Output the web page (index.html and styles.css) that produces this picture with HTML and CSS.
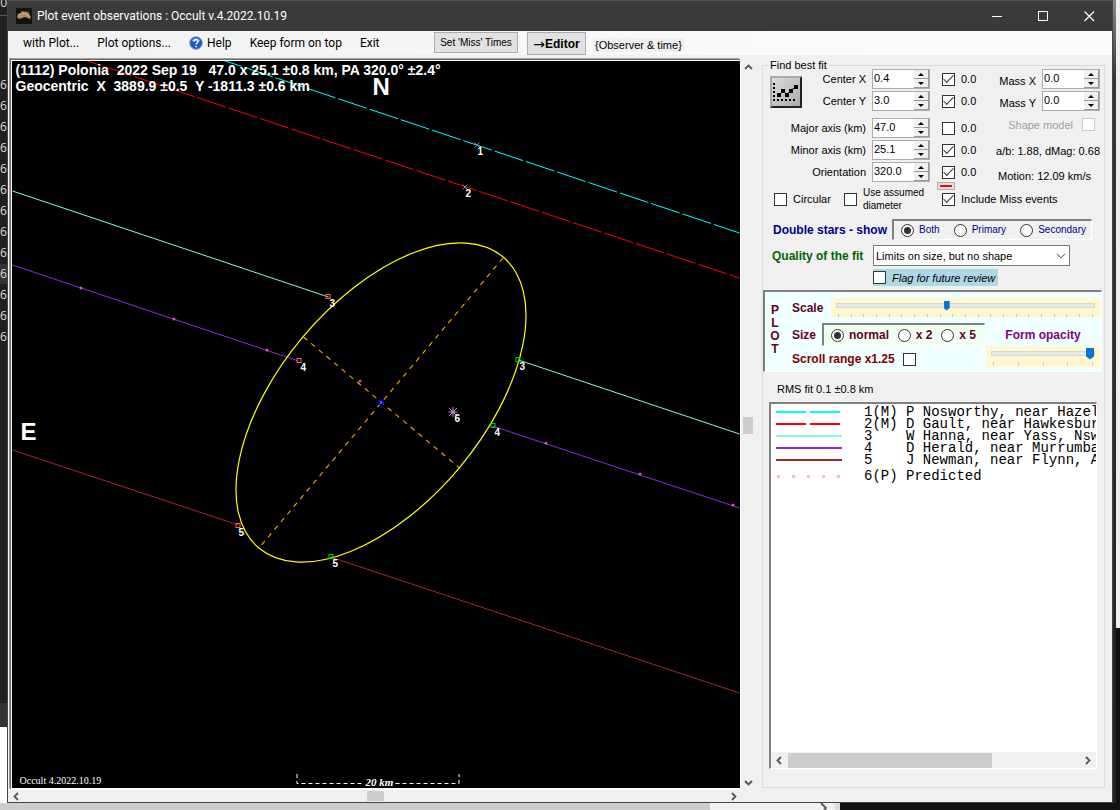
FILE: index.html
```html
<!DOCTYPE html>
<html lang="en">
<head>
<meta charset="utf-8">
<title>Plot event observations : Occult v.4.2022.10.19</title>
<link rel="stylesheet" href="styles.css">
</head>
<body>
<div class="desktop">
  <div class="behind-left">
    <span class="behind-top">20</span>
    <div class="behind-rows"><span>6</span><span>6</span><span>6</span><span>6</span><span>6</span><span>6</span><span>6</span><span>6</span><span>6</span><span class="current">6</span><span>6</span><span>6</span><span>6</span></div>
    <div class="behind-page"></div>
  </div>

  <main class="window">
    <header class="titlebar">
      <svg class="app-icon" width="16" height="16" viewBox="0 0 16 16" aria-hidden="true">
        <rect width="16" height="16" fill="#16130f"/>
        <path d="M1 9 2 6 5 5 6 3 9 4 10 3 11 5 12 3 13 6 15 9 14 11 12 10 9 9 6 10 3 11Z" fill="#b28a60"/>
        <path d="M3 7 6 5 9 6 12 7 13 9" fill="none" stroke="#d0a87a"/>
      </svg>
      <h1 class="title">Plot event observations : Occult v.4.2022.10.19</h1>
      <div class="window-buttons">
        <button aria-label="Minimize"><svg width="11" height="11" viewBox="0 0 11 11"><path d="M0 5.5H10" stroke="#fff"/></svg></button>
        <button aria-label="Maximize"><svg width="11" height="11" viewBox="0 0 11 11"><rect x=".5" y=".5" width="9" height="9" fill="none" stroke="#fff"/></svg></button>
        <button aria-label="Close"><svg width="11" height="11" viewBox="0 0 11 11"><path d="M.5 .5 10 10M10 .5 .5 10" stroke="#fff" stroke-width="1.2"/></svg></button>
      </div>
    </header>

    <nav class="menubar">
      <div class="menus">
        <button>with Plot...</button>
        <button>Plot options...</button>
        <button class="help"><svg width="14" height="14" viewBox="0 0 14 14" aria-hidden="true"><circle cx="7" cy="7" r="6.4" fill="#1d55c4" stroke="#9fb0cf"/><path d="M2.6 5.6a4.6 4.6 0 0 1 8.8 0" fill="#5f93ee"/><path d="M4.9 5.4C5 3 9.200 3 9.200 5.300 9.200 6.800 7.100 6.700 7.100 8.600" fill="none" stroke="#fff" stroke-width="1.500"/><circle cx="7.100" cy="10.600" r=".9" fill="#fff"/></svg>Help</button>
        <button>Keep form on top</button>
        <button>Exit</button>
      </div>
      <button class="push miss">Set 'Miss' Times</button>
      <button class="push editor"><span class="arrow">→</span>Editor</button>
      <span class="observer">{Observer &amp; time}</span>
    </nav>

    <div class="content">
      <section class="viewer">
        <div class="plot">
          <svg class="chart" viewBox="12 61 727 727" role="img" aria-label="Chord plot">
            <g fill="none">
              <path class="cyan" d="M222 60 739 233" stroke-dasharray="30 3" stroke-dashoffset="10"/>
              <path class="red" d="M84 60 739 278" stroke-dasharray="30 3" stroke-dashoffset="13"/>
              <path class="aqua" d="M12 191 328 297M518 360 739 434"/>
              <path class="violet" d="M12 265 298 361M492 426 739 508"/>
              <path class="brown" d="M12 450 238 525M330 557 739 693"/>
              <path d="M502.500 258 258.500 548M303 337 459 468" stroke="#ffa500" stroke-dasharray="5 5" stroke-width="1.100"/>
              <ellipse cx="380.500" cy="402.500" rx="190" ry="102" transform="rotate(-50 380.500 402.500)" stroke="#ffff00" stroke-width="1.200"/>
            </g>
            <g fill="#e04fa8">
              <circle cx="80.500" cy="288" r="1.500"/><circle cx="173.500" cy="319" r="1.500"/><circle cx="266.500" cy="350" r="1.500"/><circle cx="359.500" cy="381" r="1.500"/><circle cx="545.500" cy="443" r="1.500"/><circle cx="639.500" cy="474" r="1.500"/><circle cx="732.500" cy="505" r="1.500"/>
            </g>
            <g fill="none" stroke="#ff6347">
              <rect x="325.500" y="294.500" width="4" height="4"/><rect x="296.500" y="358.500" width="4" height="4"/><rect x="235.500" y="523.500" width="4" height="4"/>
            </g>
            <g fill="none" stroke="#00d800">
              <rect x="515.500" y="357.500" width="4" height="4"/><rect x="490.500" y="423.500" width="4" height="4"/><rect x="328.500" y="554.500" width="4" height="4"/>
            </g>
            <circle cx="380.500" cy="402.500" r="2.200" fill="none" stroke="#0000ff" stroke-width="1.600"/>
            <path d="M474 142.500l5 5m0-5l-5 5M462 184.500l5 5m0-5l-5 5" stroke="#888"/>
            <path d="M452.500 407v10M448 412h9M448.500 408l8 8M456.500 408l-8 8" stroke="#9aa0b8"/>
            <circle cx="452.500" cy="412" r="1.700" fill="#ff69b4"/>
            <g class="marks">
              <text x="477" y="155">1</text><text x="465" y="197">2</text><text x="329" y="307">3</text><text x="300" y="371">4</text><text x="519" y="370">3</text><text x="494" y="436">4</text><text x="454" y="422">6</text><text x="238" y="536">5</text><text x="332" y="567">5</text>
            </g>
            <g class="heading">
              <text x="15" y="75">(1112) Polonia  2022 Sep 19   47.0 x 25.1 ±0.8 km, PA 320.0° ±2.4°</text>
              <text x="15" y="91">Geocentric  X  3889.9 ±0.5  Y -1811.3 ±0.6 km</text>
            </g>
            <text class="compass" x="372" y="95">N</text>
            <text class="compass" x="20" y="440">E</text>
            <text class="version" x="19" y="784">Occult 4.2022.10.19</text>
            <path d="M296.500 774v9.500H362M395 783.500H458.500V774" fill="none" stroke="#fff" stroke-dasharray="4 3"/>
            <text class="km" x="365" y="786">20 km</text>
          </svg>
        </div>
        <div class="vscroll">
          <svg width="9" height="6" viewBox="0 0 9 6"><path d="M1 5 4.500 1.500 8 5" fill="none" stroke="#555" stroke-width="1.800"/></svg>
          <div class="vthumb"></div>
          <svg width="9" height="6" viewBox="0 0 9 6"><path d="M1 1 4.500 4.500 8 1" fill="none" stroke="#555" stroke-width="1.800"/></svg>
        </div>
        <div class="hscroll">
          <svg width="6" height="9" viewBox="0 0 6 9"><path d="M5 1 1.500 4.500 5 8" fill="none" stroke="#555" stroke-width="1.800"/></svg>
          <div class="hthumb"></div>
          <svg width="6" height="9" viewBox="0 0 6 9"><path d="M1 1 4.500 4.500 1 8" fill="none" stroke="#555" stroke-width="1.800"/></svg>
        </div>
      </section>

      <fieldset class="fit">
        <legend>Find best fit</legend>
        <div class="params">
          <button class="fit-button" aria-label="Fit">
            <svg width="28" height="28" viewBox="0 0 28 28"><path d="M2 5V24" stroke="#000" stroke-width="2" stroke-dasharray="2 2"/><path d="M1 22H24" stroke="#000" stroke-width="2" stroke-dasharray="2 2"/><path d="M7 17 11 13 15 17 19 12 24 9" fill="none" stroke="#222"/><path d="M5 15h4v4H5zM9 11h4v4H9zM13 15h4v4h-4zM17 11h4v4h-4zM22 7h4v4h-4z"/></svg>
          </button>
          <div class="solve">
            <div class="row"><label for="cx">Center X</label><span class="spin"><input id="cx" value="0.4"><span class="steps"><button aria-label="Increase"></button><button aria-label="Decrease"></button></span></span><label class="tick"><input type="checkbox" checked>0.0</label></div>
            <div class="row"><label for="cy">Center Y</label><span class="spin"><input id="cy" value="3.0"><span class="steps"><button aria-label="Increase"></button><button aria-label="Decrease"></button></span></span><label class="tick"><input type="checkbox" checked>0.0</label></div>
            <div class="row axis"><label for="major">Major axis (km)</label><span class="spin"><input id="major" value="47.0"><span class="steps"><button aria-label="Increase"></button><button aria-label="Decrease"></button></span></span><label class="tick"><input type="checkbox">0.0</label></div>
            <div class="row"><label for="minor">Minor axis (km)</label><span class="spin"><input id="minor" value="25.1"><span class="steps"><button aria-label="Increase"></button><button aria-label="Decrease"></button></span></span><label class="tick"><input type="checkbox" checked>0.0</label></div>
            <div class="row"><label for="pa">Orientation</label><span class="spin"><input id="pa" value="320.0"><span class="steps"><button aria-label="Increase"></button><button aria-label="Decrease"></button></span></span><label class="tick"><input type="checkbox" checked>0.0</label></div>
          </div>
          <div class="mass">
            <div class="row"><label for="mx">Mass X</label><span class="spin"><input id="mx" value="0.0"><span class="steps"><button aria-label="Increase"></button><button aria-label="Decrease"></button></span></span></div>
            <div class="row"><label for="my">Mass Y</label><span class="spin"><input id="my" value="0.0"><span class="steps"><button aria-label="Increase"></button><button aria-label="Decrease"></button></span></span></div>
            <label class="shape">Shape model<input type="checkbox" disabled></label>
            <output class="ratio">a/b: 1.88, dMag: 0.68</output>
            <output class="motion">Motion: 12.09 km/s</output>
          </div>
        </div>

        <div class="options">
          <label class="circular"><input type="checkbox">Circular</label>
          <label class="assumed"><input type="checkbox"><span>Use assumed<br>diameter</span></label>
          <div class="miss-events">
            <button class="red-key" aria-label="Miss colour"></button>
            <label><input type="checkbox" checked>Include Miss events</label>
          </div>
        </div>

        <div class="double">
          <strong>Double stars - show</strong>
          <div class="sunken stars" role="radiogroup" aria-label="Double stars - show">
            <label><input type="radio" name="stars" checked>Both</label>
            <label><input type="radio" name="stars">Primary</label>
            <label><input type="radio" name="stars">Secondary</label>
          </div>
        </div>

        <div class="quality">
          <label class="quality-label" for="quality">Quality of the fit</label>
          <div class="select-wrap">
            <select id="quality"><option>Limits on size, but no shape</option></select>
            <svg width="10" height="6" viewBox="0 0 10 6"><path d="M1 .8 5 4.800 9 .8" fill="none" stroke="#444"/></svg>
          </div>
        </div>
        <label class="flag"><input type="checkbox"><em>Flag for future review</em></label>

        <section class="plot-options sunken">
          <div class="letters"><span>P</span><span>L</span><span>O</span><span>T</span></div>
          <div class="plot-body">
            <div class="scale">
              <label for="scale">Scale</label>
              <div class="slider">
                <input id="scale" type="range" min="0" max="1000" value="425">
                <div class="ticks"><i></i><i></i><i></i><i></i><i></i><i></i><i></i><i></i><i></i><i></i><i></i><i></i><i></i><i></i><i></i><i></i><i></i><i></i><i></i><i></i><i></i></div>
              </div>
            </div>
            <div class="plot-lower">
              <div class="size-col">
                <div class="size">
                  <span>Size</span>
                  <div class="sunken sizes" role="radiogroup" aria-label="Size">
                    <label><input type="radio" name="size" checked>normal</label>
                    <label><input type="radio" name="size">x 2</label>
                    <label><input type="radio" name="size">x 5</label>
                  </div>
                </div>
                <label class="range-check">Scroll range x1.25<input type="checkbox"></label>
              </div>
              <div class="opacity">
                <label for="opacity">Form opacity</label>
                <div class="slider big">
                  <input id="opacity" type="range" min="0" max="100" value="100">
                  <div class="ticks"><i></i><i></i><i></i><i></i><i></i></div>
                </div>
              </div>
            </div>
          </div>
        </section>

        <output class="rms">RMS fit 0.1 ±0.8 km</output>

        <div class="list sunken">
          <ul>
            <li><svg width="66" height="12"><path class="cyan" d="M0 6H30M34 6H64"/></svg><span>1(M)</span><span>P Nosworthy, near Hazel</span></li>
            <li><svg width="66" height="12"><path class="red" d="M0 6H30M34 6H64"/></svg><span>2(M)</span><span>D Gault, near Hawkesbur</span></li>
            <li><svg width="66" height="12"><path class="aqua" d="M0 6H66"/></svg><span>3</span><span>W Hanna, near Yass, Nsw</span></li>
            <li><svg width="66" height="12"><path class="violet" d="M0 6H66"/></svg><span>4</span><span>D Herald, near Murrumba</span></li>
            <li><svg width="66" height="12"><path class="brown" d="M0 6H66"/></svg><span>5</span><span>J Newman, near Flynn, A</span></li>
            <li class="predicted"><svg width="66" height="12" fill="none" stroke="#ff69b4"><circle cx="2.500" cy="6.500" r="1"/><circle cx="17.500" cy="6.500" r="1"/><circle cx="32.500" cy="6.500" r="1"/><circle cx="47.500" cy="6.500" r="1"/><circle cx="62.500" cy="6.500" r="1"/></svg><span>6(P)</span><span>Predicted</span></li>
          </ul>
          <div class="list-scroll">
            <svg width="6" height="9" viewBox="0 0 6 9"><path d="M5 1 1.500 4.500 5 8" fill="none" stroke="#555" stroke-width="1.800"/></svg>
            <div class="list-track"><div class="list-thumb"></div></div>
            <svg width="6" height="9" viewBox="0 0 6 9"><path d="M1 1 4.500 4.500 1 8" fill="none" stroke="#555" stroke-width="1.800"/></svg>
          </div>
        </div>
      </fieldset>
    </div>
  </main>

  <div class="behind-right"></div>
  <div class="behind-bottom"><div class="behind-scroll"><svg width="7" height="7" viewBox="0 0 7 7"><path d="M1 0 6 5 4 7" fill="none" stroke="#555" stroke-width="1.800"/></svg></div></div>
</div>
</body>
</html>
```
FILE: styles.css
```css
* { box-sizing: border-box; }
body { margin: 0; font: 11px/14px "Liberation Sans", Arial, sans-serif; color: #000; background: #111; }
button, input, select { font: inherit; color: inherit; margin: 0; padding: 0; }
button { border: 0; background: none; }
svg { display: block; flex: none; }
label { white-space: nowrap; }

.desktop { display: grid; grid-template-columns: 7px minmax(0, 1fr) 7px; grid-template-rows: minmax(0, 1fr) 7px; height: 100vh; min-height: 640px; overflow: hidden; }

/* windows showing past the edges */
.behind-left { display: flex; flex-direction: column; overflow: hidden; background: #202020; color: #ddd; font: 12px/20px "Open Sans", sans-serif; }
.behind-top { display: flex; justify-content: flex-end; height: 75px; line-height: 6px; background: linear-gradient(#202020 15px, #555 15px, #555 16px, #202020 16px); }
.behind-rows { display: flex; flex-direction: column; gap: 1px; flex: 1; }
.behind-rows .current { background: #333; }
.behind-page { height: 100px; border-top: 24px solid #333; background: #fff; }
.behind-right { background: linear-gradient(#eee 628px, #111 628px) right / 4px 100% no-repeat, linear-gradient(#888, #333 80px, #222); }
.behind-bottom { grid-column: 1 / -1; background: #111; }
.behind-scroll { width: 75%; height: 7px; background: linear-gradient(90deg, #cdcdcd 85%, #f0f0f0 85%); border-right: 5px solid #ddd; padding-right: 8px; display: flex; justify-content: flex-end; }

/* window frame */
.window { display: flex; flex-direction: column; min-width: 0; background: #f0f0f0; border: solid #444; border-width: 0 1px 1px; }
.titlebar { display: flex; align-items: center; height: 31px; padding-left: 8px; background: #3a3a3a; border-top: 1px solid #555; color: #fff; }
.title { margin: 0 0 0 5px; flex: 1; font: 12px/20px Roboto, "Noto Sans", sans-serif; }
.window-buttons { display: flex; }
.window-buttons button { width: 46px; height: 30px; display: grid; place-items: center; }

.menubar { display: flex; align-items: flex-start; height: 24px; padding-left: 15px; background: linear-gradient(90deg, #f0f0f0, #fcfcfc 80%); }
.menus { display: flex; gap: 18px; width: 411px; font: 12px/24px Roboto, "Noto Sans", sans-serif; white-space: nowrap; }
.menus .help { display: flex; align-items: center; gap: 4px; }
.push { background: #e1e1e1; border: 1px solid #adadad; white-space: nowrap; margin-top: 1px; }
.miss { width: 84px; height: 21px; font-size: 10px; }
.editor { display: flex; align-items: center; justify-content: center; width: 59px; height: 23px; margin-left: 9px; font-weight: bold; font-size: 12px; }
.arrow { font: 14px/20px "DejaVu Sans", sans-serif; }
.observer { margin: 7px 0 0 7px; padding: 0 2px; background: #f0f0f0; }

.content { display: flex; flex: 1; min-height: 0; padding: 3px 7px 0 1px; gap: 7px; }

/* plot area */
.viewer { flex: 1; min-width: 0; display: grid; grid-template-columns: minmax(0, 1fr) 14px; grid-template-rows: minmax(0, 1fr) 12px; }
.plot { background: #000; border: solid #fff; border-width: 1px 1px 2px; box-shadow: -1px -1px #696969, -2px -2px #a0a0a0; margin: 2px 0 0 2px; }
.chart { width: 100%; height: 100%; }
.cyan { stroke: #00ffff; } .red { stroke: #ff0000; } .aqua { stroke: #7fffd4; } .violet { stroke: #8a2be2; } .brown { stroke: #a52a2a; }
.marks text { font: bold 10px "Liberation Sans", sans-serif; fill: #fff; }
.heading text { font: bold 14px "Liberation Sans", sans-serif; fill: #fff; white-space: pre; }
.compass { font: bold 24px "Liberation Sans", sans-serif; fill: #fff; }
.version { font: 10px "Liberation Serif", serif; fill: #fff; }
.km { font: italic bold 11px "Liberation Serif", serif; fill: #fff; }
.vscroll { display: flex; flex-direction: column; align-items: center; justify-content: space-between; padding: 6px 0 4px; }
.vthumb { width: 10px; height: 17px; background: #cdcdcd; }
.hscroll { display: flex; align-items: center; justify-content: space-between; padding: 0 4px; }
.hthumb { width: 17px; height: 10px; background: #cdcdcd; }

/* tick boxes, radios, spinners, sliders */
input[type="checkbox"], input[type="radio"] { appearance: none; flex: none; width: 13px; height: 13px; border: 1px solid #333; background: #fff; display: grid; place-items: center; }
input[type="checkbox"]:checked::after { content: ""; width: 4px; height: 9px; border: solid #333; border-width: 0 1px 1px 0; transform: rotate(45deg) translate(-1px, -1px); }
input[type="radio"] { border-radius: 50%; }
input[type="radio"]:checked::after { content: ""; width: 7px; height: 7px; border-radius: 50%; background: #333; }
input:disabled { border-color: #ccc; }
.sunken { border: solid; border-width: 2px 1px 1px 2px; border-color: #808080 #fff #fff #808080; }
.spin { display: flex; flex: none; width: 58px; height: 20px; background: #fff; border: 1px solid #abadb3; }
.spin input { flex: 1; min-width: 0; border: 0; background: none; padding: 0 0 3px 1px; outline: 0; }
.steps { display: flex; flex-direction: column; width: 15px; }
.steps button { flex: 1; display: grid; place-items: center; background: #f0f0f0; border: solid #999; border-width: 0 1px 1px 0; }
.steps button::after { content: ""; border: solid transparent; border-width: 0 3px 3px; border-bottom-color: #000; }
.steps button:last-child::after { border-width: 3px 3px 0; border-top-color: #000; }
.slider { padding: 5px 5px 0; background: #fff8cf; }
.slider input { appearance: none; display: block; width: 100%; height: 5px; background: #e7eaea; border: 1px solid #d6d6d6; }
.slider input::-webkit-slider-thumb { appearance: none; width: 6px; height: 10px; background: #0078d7; clip-path: polygon(0 0, 100% 0, 100% 75%, 50% 100%, 0 75%); }
.ticks { display: flex; justify-content: space-between; padding: 6px 2px 0; }
.ticks i { width: 1px; height: 3px; background: #c4c4c4; }
.slider.big input::-webkit-slider-thumb { width: 8px; height: 12px; }

/* fit panel */
.fit { display: flex; flex-direction: column; width: 343px; flex: none; min-width: 0; margin: 3px 0 14px; padding: 0; border: 1px solid #dcdcdc; }
.fit legend { margin-left: 5px; padding: 0 2px; line-height: 8px; }
.params { display: flex; padding-left: 7px; }
.fit-button { display: grid; flex: none; place-items: center; width: 32px; height: 32px; margin-top: 7px; background: linear-gradient(135deg, #ddd, #aaa); border: 2px solid; border-color: #aaa #222 #222 #aaa; }
.solve, .mass { display: flex; flex-direction: column; gap: 2px; }
.row { display: flex; align-items: center; justify-content: flex-end; gap: 6px; height: 20px; }
.axis { margin-top: 5px; }
.tick { display: flex; flex: none; align-items: center; gap: 6px; width: 46px; margin-left: 6px; }
.solve { flex: none; width: 202px; margin-left: -16px; }
.mass { flex: 1; min-width: 0; padding-right: 4px; align-items: flex-end; }
.mass .row label { padding-top: 4px; }
.shape { display: flex; align-items: center; gap: 9px; height: 23px; padding-right: 5px; color: #a0a0a0; }
.ratio { height: 24px; line-height: 26px; white-space: nowrap; }
.motion { height: 18px; line-height: 24px; padding-right: 9px; white-space: nowrap; }
.options { display: flex; height: 34px; padding-left: 11px; }
.options label { display: flex; align-items: center; gap: 6px; }
.circular { width: 70px; }
.assumed { width: 93px; font-size: 10px; line-height: 13px; }
.miss-events { display: flex; flex-direction: column; gap: 2px; }
.red-key { width: 18px; height: 8px; background: linear-gradient(#f00, #f00) center / 12px 2px no-repeat #e1e1e1; border: 1px solid #adadad; }
.miss-events label { padding-left: 5px; }
.miss-events label, .miss-events button { flex: none; }
.double { display: flex; align-items: center; justify-content: space-between; margin-top: 3px; padding: 0 12px 0 10px; color: #00008b; font-size: 12px; }
.stars { display: flex; align-items: center; justify-content: space-between; width: 200px; height: 21px; padding: 0 5px 0 7px; font-size: 10px; }
.stars label, .sizes label { display: flex; align-items: center; gap: 5px; }
.quality { display: flex; align-items: center; margin-top: 5px; padding-left: 9px; }
.quality-label { width: 101px; font-weight: bold; font-size: 12px; color: #006400; }
.select-wrap { position: relative; width: 197px; }
.select-wrap select { appearance: none; width: 100%; height: 21px; padding-left: 2px; border: 1px solid #7a7a7a; border-radius: 0; background: #fff; }
.select-wrap svg { position: absolute; right: 4px; top: 8px; pointer-events: none; }
.flag { display: flex; align-items: center; gap: 6px; width: 125px; height: 17px; margin: 3px 0 0 110px; background: #add8e6; }

.plot-options { display: flex; height: 82px; margin: 4px 2px 0 0; background: #f0ffff; color: #66002a; font-size: 12px; font-weight: bold; }
.letters { display: flex; flex-direction: column; align-items: center; width: 20px; padding-top: 12px; line-height: 13px; }
.plot-body { flex: 1; padding: 6px 1px 0 7px; }
.scale { display: flex; align-items: center; }
.scale label { width: 39px; }
.scale .slider { flex: 1; height: 19px; }
.plot-lower { display: flex; justify-content: space-between; }
.size-col { width: 193px; padding-top: 6px; }
.size { display: flex; align-items: center; }
.size > span { width: 30px; }
.sizes { display: flex; align-items: center; justify-content: space-between; flex: 1; height: 23px; padding: 0 8px 0 7px; background: #f0fff0; }
.range-check { display: flex; align-items: center; gap: 8px; padding-top: 6px; color: #800000; }
.opacity { width: 114px; padding-top: 11px; color: #800080; text-align: center; }
.opacity .slider { margin-top: 4px; height: 21px; }
.rms { margin: 10px 0 6px 14px; }

.list { flex: 1; min-height: 0; display: flex; flex-direction: column; margin: 0 7px 18px 6px; background: #fff; overflow: hidden; }
.list ul { flex: 1; margin: 0; padding: 2px 0 0 5px; list-style: none; overflow: hidden; font: 14px/12px "Liberation Mono", monospace; }
.list li { display: grid; grid-template-columns: 88px 42px 1fr; height: 12px; white-space: pre; }
.list li svg { stroke-width: 2; }
.list li.predicted { margin-top: 4px; }
.list .predicted svg { stroke-width: 1; }
.list-scroll { display: flex; align-items: center; height: 16px; padding: 0 5px; gap: 6px; background: #f0f0f0; }
.list-track { flex: 1; }
.list-thumb { width: 70%; height: 15px; background: #cdcdcd; }
```
